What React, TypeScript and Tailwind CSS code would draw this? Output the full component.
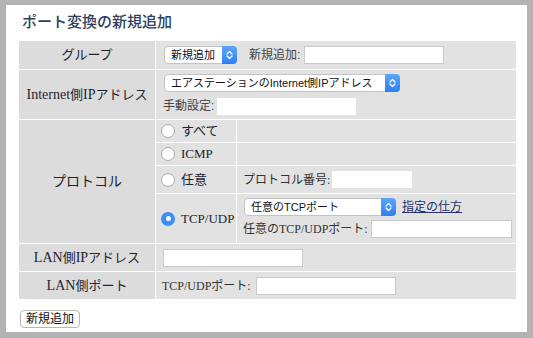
import React from "react";

const serif = "font-['Liberation_Serif','Noto_Sans_CJK_JP',serif]";
const sans = "font-['Liberation_Sans','Noto_Sans_CJK_JP',sans-serif]";

function Chevrons() {
  return (
    <svg width="7" height="10" viewBox="0 0 7 10" fill="none" stroke="white" strokeWidth="1.3" strokeLinecap="round" strokeLinejoin="round">
      <path d="M1 4 L3.5 1.5 L6 4" />
      <path d="M1 6 L3.5 8.5 L6 6" />
    </svg>
  );
}

function Select({ text, width }: { text: string; width: string }) {
  return (
    <div className={`flex h-[18px] items-center rounded-[4px] border border-[#c4c4c4] bg-white ${width}`}>
      <span className={`flex-1 whitespace-nowrap pl-[6px] text-[11px] leading-[16px] text-[#111] ${sans}`}>{text}</span>
      <span className="-my-px -mr-px flex h-[18px] w-[15px] shrink-0 items-center justify-center rounded-r-[4px] bg-gradient-to-b from-[#5aa6fa] to-[#2f7ff3]">
        <Chevrons />
      </span>
    </div>
  );
}

function Radio({ checked }: { checked?: boolean }) {
  return checked ? (
    <span className="flex h-[14px] w-[14px] items-center justify-center rounded-full bg-[#3d8ff5]">
      <span className="h-[5px] w-[5px] rounded-full bg-white" />
    </span>
  ) : (
    <span className="h-[14px] w-[14px] rounded-full border border-[#a9a9a9] bg-white" />
  );
}

const labelCell = `flex items-center justify-center bg-[#dcdcdc] text-[13px] text-[#1e2430] ${serif}`;
const valueCell = "bg-[#e2e2e2]";
const radioCell = `${valueCell} flex items-center gap-[6px] pl-[5px] text-[13px] text-[#1e2430] ${serif}`;

export default function App() {
  return (
    <div className="h-[338px] w-[533px] bg-[#b3b3b3] pl-[6px] pt-[5px]">
      <div className="h-[327px] w-[521px] bg-white">
        <div className={`h-[36px] pl-[16px] pt-[7px] text-[15px] font-medium leading-[20px] text-[#2d3e5e] ${serif}`}>
          ポート変換の新規追加
        </div>
        <div className="ml-[13px] grid grid-cols-[136px_80px_279px] grid-rows-[28px_49px_22px_22px_27px_49px_27px_27px] gap-px">
          <div className={labelCell}>グループ</div>
          <div className={`${valueCell} col-span-2 flex items-center pl-[8px]`}>
            <Select text="新規追加" width="w-[73px]" />
            <span className={`ml-[12px] text-[12px] text-[#444] ${sans}`}>新規追加:</span>
            <div className="ml-[4px] h-[18px] w-[140px] border border-[#c9c9c9] bg-white" />
          </div>

          <div className={labelCell}>
            <span className="text-[14px]">Internet</span>側<span className="text-[14px]">IP</span>アドレス
          </div>
          <div className={`${valueCell} col-span-2 flex flex-col pl-[8px] pt-[4px]`}>
            <Select text="エアステーションのInternet側IPアドレス" width="w-[236px]" />
            <div className="mt-[5px] -ml-px flex items-center">
              <span className={`text-[12px] text-[#444] ${sans}`}>手動設定:</span>
              <div className="ml-[3px] h-[17px] w-[139px] bg-white" />
            </div>
          </div>

          <div className={`${labelCell} row-span-4 text-[14px]`}>プロトコル</div>
          <div className={radioCell}>
            <Radio />すべて
          </div>
          <div className={valueCell} />
          <div className={radioCell}>
            <Radio />ICMP
          </div>
          <div className={valueCell} />
          <div className={radioCell}>
            <Radio />任意
          </div>
          <div className={`${valueCell} flex items-center pl-[6px] text-[12px] text-[#333] ${serif}`}>
            プロトコル番号:
            <div className="ml-[2px] h-[17px] w-[80px] bg-white" />
          </div>
          <div className={radioCell}>
            <Radio checked />TCP/UDP
          </div>
          <div className={`${valueCell} flex flex-col pl-[7px] pt-[4px]`}>
            <div className="flex items-center">
              <Select text="任意のTCPポート" width="w-[152px]" />
              <a className={`ml-[6px] text-[12px] text-[#25306b] underline ${serif}`}>指定の仕方</a>
            </div>
            <div className={`mt-[4px] -ml-px flex items-center text-[12px] text-[#333] ${serif}`}>
              任意のTCP/UDPポート:
              <div className="ml-[3px] h-[18px] w-[141px] border border-[#c9c9c9] bg-white" />
            </div>
          </div>

          <div className={labelCell}>
            <span className="text-[14px]">LAN</span>側<span className="text-[14px]">IP</span>アドレス
          </div>
          <div className={`${valueCell} col-span-2 flex items-center pl-[7px]`}>
            <div className="h-[18px] w-[140px] border border-[#c9c9c9] bg-white" />
          </div>

          <div className={labelCell}>
            <span className="text-[14px]">LAN</span>側ポート
          </div>
          <div className={`${valueCell} col-span-2 flex items-center pl-[6px] text-[12px] text-[#333] ${serif}`}>
            TCP/UDPポート:
            <div className="ml-[5px] h-[18px] w-[140px] border border-[#c9c9c9] bg-white" />
          </div>
        </div>
        <button className={`ml-[14px] mt-[11px] flex h-[18px] w-[60px] items-center justify-center rounded-[4px] border border-[#b8b8b8] bg-white text-[12px] text-[#111] ${sans}`}>
          新規追加
        </button>
      </div>
    </div>
  );
}
